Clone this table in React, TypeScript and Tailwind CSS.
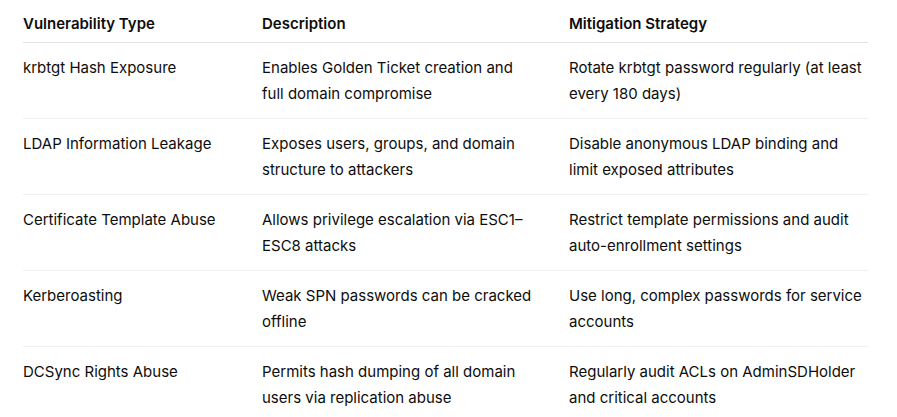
import React from "react";

const rows = [
  ["krbtgt Hash Exposure", "Enables Golden Ticket creation and full domain compromise", "Rotate krbtgt password regularly (at least every 180 days)"],
  ["LDAP Information Leakage", "Exposes users, groups, and domain structure to attackers", "Disable anonymous LDAP binding and limit exposed attributes"],
  ["Certificate Template Abuse", "Allows privilege escalation via ESC1–ESC8 attacks", "Restrict template permissions and audit auto-enrollment settings"],
  ["Kerberoasting", "Weak SPN passwords can be cracked offline", "Use long, complex passwords for service accounts"],
  ["DCSync Rights Abuse", "Permits hash dumping of all domain users via replication abuse", "Regularly audit ACLs on AdminSDHolder and critical accounts"],
];

const pad = ["pr-4", "pr-[35px]", "pr-0"];

export default function App() {
  return (
    <div className="w-[897px] h-[417px] overflow-hidden bg-white text-[#0d0d0d] pt-[11px]" style={{ fontFamily: "Inter, 'Noto Sans', sans-serif" }}>
      <table className="ml-[23px] w-[845px] table-fixed border-collapse text-[15px] leading-[26px]">
        <colgroup>
          <col className="w-[239px]" />
          <col className="w-[307px]" />
          <col className="w-[299px]" />
        </colgroup>
        <thead>
          <tr className="border-b border-[#e3e3e3]">
            <th className="text-left font-semibold pb-[5px] pr-4">Vulnerability Type</th>
            <th className="text-left font-semibold pb-[5px] pr-[35px]">Description</th>
            <th className="text-left font-semibold pb-[5px] pr-0">Mitigation Strategy</th>
          </tr>
        </thead>
        <tbody>
          {rows.map((r, i) => (
            <tr key={i} className="border-b border-[#f0f0f0]">
              {r.map((c, j) => (
                <td key={j} className={`align-top pt-[12px] pb-[11px] font-normal ${pad[j]}`}>{c}</td>
              ))}
            </tr>
          ))}
        </tbody>
      </table>
    </div>
  );
}
